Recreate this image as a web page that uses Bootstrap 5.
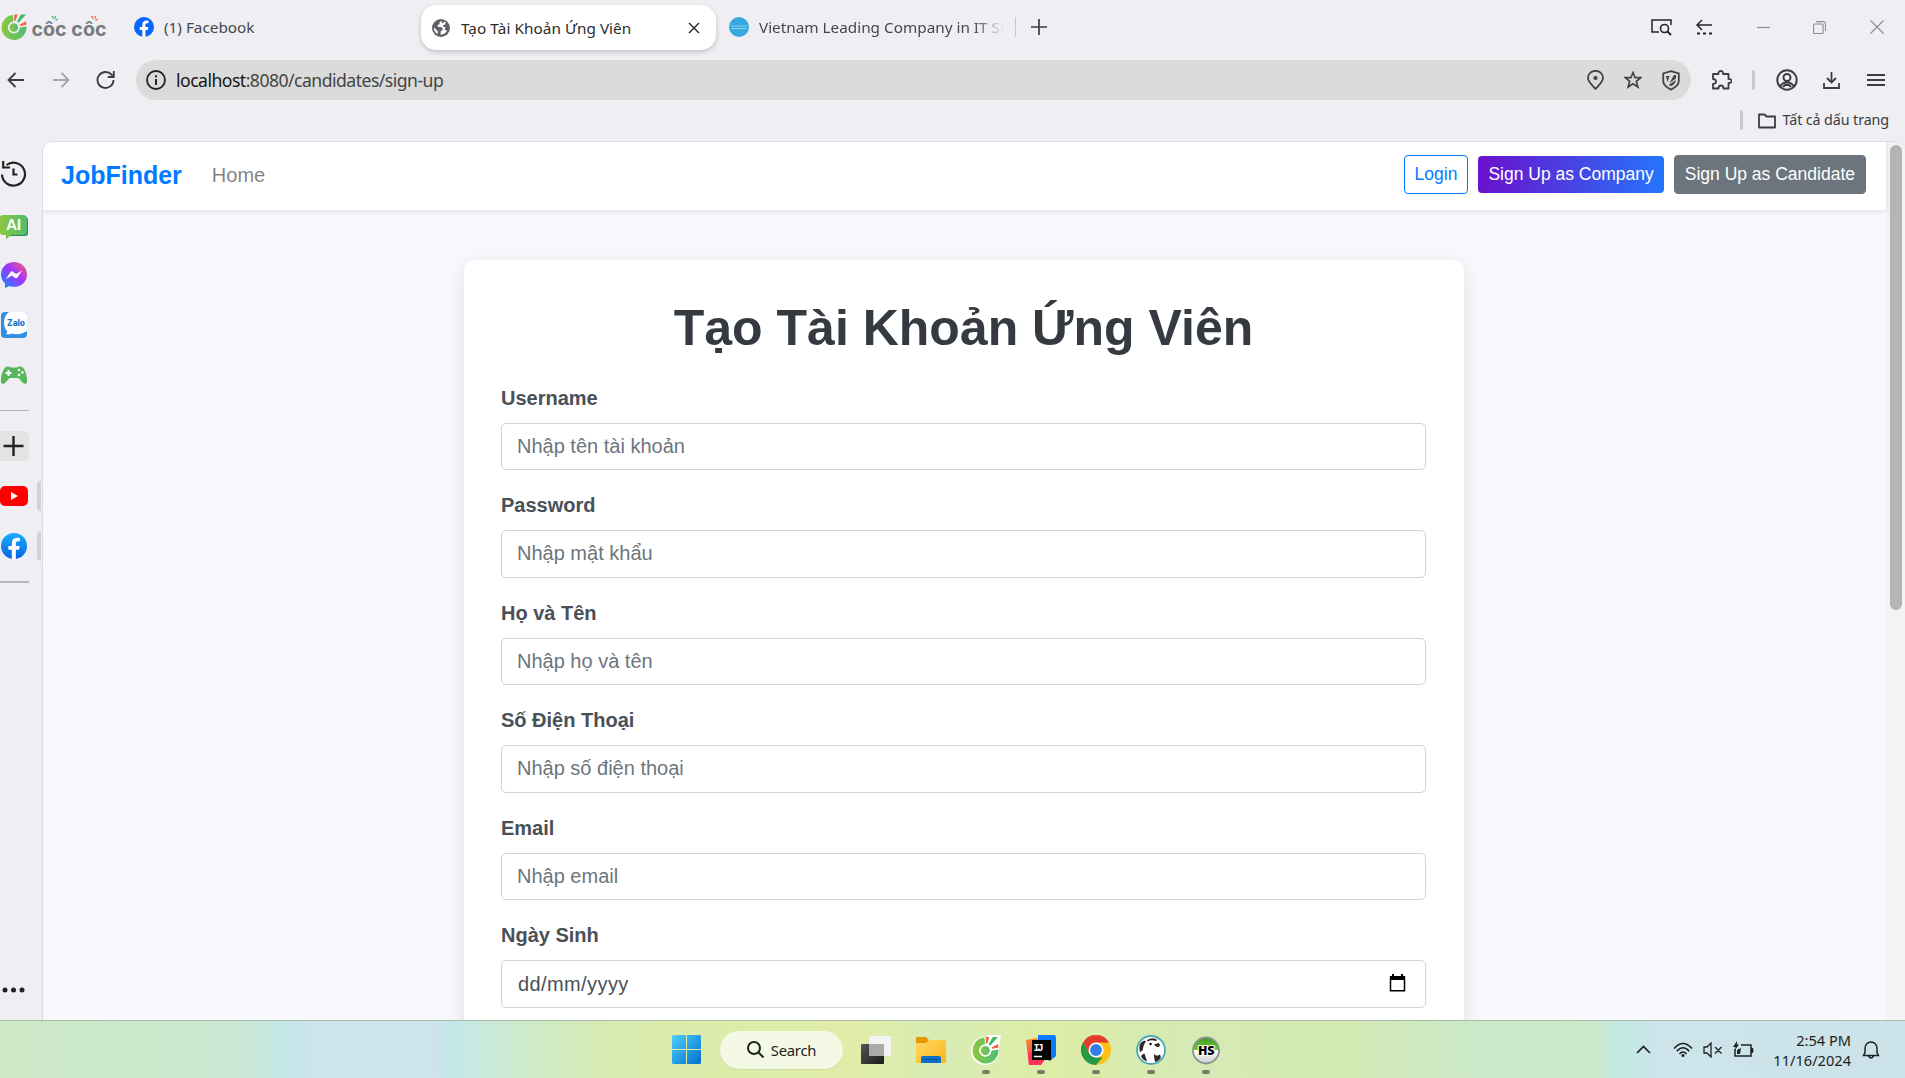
<!DOCTYPE html>
<html lang="vi">
<head>
<meta charset="utf-8">
<title>Tạo Tài Khoản Ứng Viên</title>
<link href="https://cdn.jsdelivr.net/npm/bootstrap@5.3.0/dist/css/bootstrap.min.css" rel="stylesheet">
<script defer src="https://cdn.jsdelivr.net/npm/bootstrap@5.3.0/dist/js/bootstrap.bundle.min.js"></script>
<style>
html,body{height:100%;overflow:hidden}
body{background:#efeef3;font-family:"Noto Sans","Open Sans",sans-serif;color:#3c3c41;font-size:16px;line-height:20px}
svg{display:block;flex:none}
.ln{fill:none;stroke:currentColor;stroke-width:1.8}
.win{height:1078px}
.midrow{min-height:0;flex:1 1 0}
/* tab strip */
.tabstrip{height:55px;padding-bottom:1px}
.tabtext{font-size:15.3px;color:#47474b}
.fbtab{width:287px;margin-left:26px;gap:10px}
.livetab{width:295px;height:45px;border-radius:15px;box-shadow:0 2px 5px #0003;padding:0 16px 0 11px;color:#222;margin-top:1px}
.livetab .tabtext{color:#2c2c2e;margin-left:11px;letter-spacing:.05px}
.nexttab{margin-left:13px;width:286px;gap:10px}
.fadetext{width:247px;-webkit-mask-image:linear-gradient(90deg,#000 215px,transparent 245px);mask-image:linear-gradient(90deg,#000 215px,transparent 245px)}
.winbtns{margin-right:21px;color:#8e8e92}
/* toolbar */
.toolbar{height:50px;padding:5px 20px 5px 7px}
.addr{width:1555px;margin-left:20px;background:#dbdbdb;padding:0 10px;color:#444}
.addrtext{font-size:17.6px;margin-left:10px;letter-spacing:-.52px}
.addrtext b{font-weight:400;color:#151515}
.vsep{width:3px;height:20px;background:#c8c8cc;border-radius:2px}
.marks{height:36px;padding:0 16px 11px 0}
.marktext{font-size:14.3px}
/* side panel */
.sidebar{width:42px;padding-top:9px}
.slot{height:50px;position:relative}
.slot::after{content:"";position:absolute}
.openapp::after{left:37px;top:10px;width:4px;height:30px;background:#d2d2d4;border-radius:4px 0 0 4px}
.rule{width:29px;background:#b6b6ba}
/* page */
.viewport-box{border:1px solid #dcdce0;border-width:1px 0 0 1px;border-radius:10px 10px 0 0;font-family:"Liberation Sans",Arial,sans-serif;font-size:20px;line-height:30px}
.pagebody{background:#f8f9fd}
.sitebar{height:68px;padding:0 20px 3px 18px;box-shadow:0 2px 5px #0000001a;position:relative}
.sitebar .navbar-brand{font-size:25px;font-weight:700;color:#007bff;margin-right:30px;padding:0}
.sitebar .nav-link{color:#00000080;padding:0}
.sitebar .btn{font-size:17.5px;line-height:26.25px;padding:5px 10px;border-radius:4px;border-width:1px}
.b-login{color:#007bff;border-color:#007bff}
.sitebar .b-comp{background:linear-gradient(90deg,#6a11cb,#2575fc);color:#fff;border:0}
.b-cand{background:#6c757d;color:#fff;border-color:#6c757d}
.formwrap{padding:50px 2px 0 0}
.formbox{width:1000px;margin:0 auto;padding:37.5px;border-radius:10px;box-shadow:0 5px 19px #0000001a;height:800px}
.formbox h1{font-size:50px;line-height:60px;font-weight:700;color:#343a40;margin:0 0 25px}
.formbox .form-label{font-weight:600;color:#495057;margin:0 0 10px;display:block}
.formbox .form-control{height:47.5px;border:1px solid #ced4da;border-radius:5px;font-size:20px;padding:6px 15px;color:#495057;line-height:30px}
.formbox .form-control::placeholder{color:#6c757d}
.formbox .datefield{padding-left:16px;padding-right:19px;letter-spacing:.4px}
.fld{margin-bottom:20px}
.scroller{width:19px;background:#f3f3f3;padding:3px 3px 0 4px}
.thumb{height:465px;width:12px;border-radius:6px;background:#b4b4b4}
/* taskbar */
.taskbar{height:58px;border-top:1px solid #a9bba4;color:#1d2321;background:linear-gradient(90deg,#cce8c6 0,#cae8cc 180px,#cae8d6 245px,#c2e7e9 285px,#cce4ea 310px,#cce4ea 435px,#c3e8ea 452px,#cbead5 500px,#d3ebbb 570px,#dcebaa 660px,#dfeda8 860px,#d8ebb4 940px,#deeda6 1050px,#d5eab4 1180px,#d4eab5 1350px,#cbe9c9 1480px,#cce9ca 1595px,#c2e8e2 1618px,#cce4ea 1655px,#cde3ea 100%)}
.startzone{margin-left:672px;width:549px}
.searchpill{width:123px;height:38px;border-radius:19px;background:#f4f9e6;margin:0 18px 0 19px;gap:7px;font-size:14.8px;box-shadow:0 1px 1px #0001}
.tapp{position:relative;width:30px;height:30px;margin-right:25px}
.running::after{content:"";position:absolute;left:11px;bottom:-9px;width:8px;height:4px;border-radius:2px;background:#727d63}
.tray{margin-left:auto;padding-right:25px}
.clock{font-size:14.6px;line-height:20px;width:97px;margin-right:11px}
</style>
</head>
<body>
<svg width="0" height="0" class="position-absolute">
<defs>
<linearGradient id="gr" x1="0" x2="1"><stop offset="0" stop-color="#8cc83f"/><stop offset="1" stop-color="#4fbd72"/></linearGradient>
<linearGradient id="fbg" x2="0" y2="1"><stop stop-color="#19aeff"/><stop offset="1" stop-color="#0563e4"/></linearGradient>
<linearGradient id="ms" x1="1" y1="0" x2="0" y2="1"><stop offset="0" stop-color="#ff6968"/><stop offset=".45" stop-color="#a033ff"/><stop offset="1" stop-color="#0a90ff"/></linearGradient>
<linearGradient id="wn" x2="1" y2="1"><stop stop-color="#4fd0fb"/><stop offset="1" stop-color="#0070cc"/></linearGradient>
<linearGradient id="fo" x2="1" y2="1"><stop stop-color="#ffd866"/><stop offset="1" stop-color="#fbb616"/></linearGradient>
<linearGradient id="ij" x1="0" y1="0" x2="0" y2="1"><stop stop-color="#fb8a2a"/><stop offset="1" stop-color="#fc2a6d"/></linearGradient>
<linearGradient id="hs" x2="0" y2="1"><stop stop-color="#3a9a20"/><stop offset=".5" stop-color="#70cf38"/><stop offset=".5" stop-color="#fff"/><stop offset="1" stop-color="#ccc"/></linearGradient>
<linearGradient id="tv" x2="1" y2="1"><stop stop-color="#555"/><stop offset="1" stop-color="#1c1c1c"/></linearGradient>
<symbol id="coc" viewBox="0 0 26 26">
<path fill="url(#gr)" d="M12 1A12.500 12.500 0 1 0 25.500 12.500L18.800 13.500A6 6 0 1 1 12.500 7.500Z"/>
<circle cx="12.800" cy="13.500" r="4.300" fill="url(#gr)"/>
<path fill="#f3603c" d="M13.300.500h3.200l-1.800 6.300h-1.400zM19 10.500l6-3.300.5 3.500-6.200 1.200z"/>
<path fill="#3fb864" d="M20 .500h5l-7.500 8.300-1.500-1z"/>
</symbol>
<symbol id="fb" viewBox="0 0 24 24"><circle cx="12" cy="12" r="12"/><path fill="#fff" d="M10 24v-8.500H6.800V12H10V9.500c0-3.300 2-5.200 4.900-5.200 1.200 0 2.100.2 2.500.3v3h-1.600c-1.700 0-2.100.9-2.100 2V12h3.500l-.6 3.500h-2.900V24z"/></symbol>
</defs>
</svg>

<div class="win d-flex flex-column">
<header class="flex-shrink-0">
 <div class="tabstrip d-flex align-items-center">
  <svg width="108" height="30" viewBox="0 0 108 30"><use href="#coc" x="1" y="2" width="26" height="26"/><text x="31.500" y="24" font-family="Inter" font-weight="700" font-size="19" textLength="75" lengthAdjust="spacingAndGlyphs" fill="#77797c">côc côc</text><path d="M52 4l2 3M55 4l.5 2.500M57.500 7l-2 1.500" stroke="#41b96c" stroke-width="1.200"/><path d="M91.500 4l2 3M95 4l.5 2.500M97.500 7l-2 1.500" stroke="#f3603c" stroke-width="1.200"/></svg>
  <div class="fbtab d-flex align-items-center"><svg width="20" height="20" fill="#0866ff"><use href="#fb"/></svg><span class="tabtext">(1) Facebook</span></div>
  <div class="livetab bg-white d-flex align-items-center">
   <svg width="18" height="18" viewBox="0 0 18 18"><circle cx="9" cy="9" r="9" fill="#5f6368"/><path fill="#fff" d="M9.500 1.800l-2 1.500.2 1.800-2 .8.200 2 3.300.2 1.500 1.500-.2 1.600-1.700.8-.2 3.800c3-.2 5.300-1.800 6.500-4.200L12.500 11l1-2.700-2.200-.6-.3-1.500 2-.5.600-2.400-1.300-.8-1 1.500-1.400.2zM1.800 8.300l4 4-.2 2.600C3 13.600 1.700 11 1.800 8.300z"/></svg>
   <span class="tabtext">Tạo Tài Khoản Ứng Viên</span>
   <svg class="ms-auto ln" width="12" height="12"><path stroke-width="1.400" d="M1 1l10 10M11 1L1 11"/></svg>
  </div>
  <div class="nexttab d-flex align-items-center"><svg width="20" height="20"><circle cx="10" cy="10" r="10" fill="#36a9e1"/><path d="M2 9h16M3 11.500h14" stroke="#a9dcf3" stroke-width="1" stroke-dasharray="2 .5"/></svg><span class="tabtext fadetext text-nowrap overflow-hidden">Vietnam Leading Company in IT Se</span></div>
  <div class="vsep" style="width:1px"></div>
  <svg class="ln" width="16" height="16" style="margin-left:15px"><path stroke-width="1.700" d="M8 0v16M0 8h16"/></svg>
  <div class="winbtns ms-auto d-flex align-items-center">
   <svg class="ln text-dark" width="21" height="17" style="margin-right:24px"><path d="M8 13H1V1h19v5" stroke-width="1.500"/><circle cx="13.500" cy="9.500" r="4" stroke-width="1.600"/><path d="M16.500 12.500l3.500 3.500"/></svg>
   <svg class="ln text-dark" width="17" height="17" style="margin-right:44px"><path d="M16 6H1M6 1L1 6l5 5" stroke-width="1.500"/><path d="M1 14.500h16" stroke-dasharray="3 3"/></svg>
   <svg class="ln" width="13" height="13" style="margin-right:43px"><path d="M0 6.500h13" stroke-width="1.200"/></svg>
   <svg class="ln" width="13" height="13" style="margin-right:44px"><rect x=".6" y="3" width="9.500" height="9.500" rx="1" stroke-width="1.100"/><path d="M3 .6h7.500q2 0 2 2V10" stroke-width="1.100"/></svg>
   <svg class="ln" width="14" height="14"><path d="M.5.5l13 13M13.500.5l-13 13" stroke-width="1.200"/></svg>
  </div>
 </div>
 <div class="toolbar d-flex align-items-center">
  <svg class="ln" width="17" height="16"><path d="M17 8H1.500M8.500 1l-7 7 7 7"/></svg>
  <svg class="ln" width="17" height="16" style="margin-left:29px;color:#a5a5aa"><path d="M0 8h15.500M8.500 1l7 7-7 7"/></svg>
  <svg class="ln" width="19" height="20" style="margin-left:26px"><path d="M17.500 10a8 8 0 1 1-2-5.300l2 1.800M17.800 1v6h-6"/></svg>
  <div class="addr h-100 rounded-pill d-flex align-items-center" style="margin-left:21px">
   <svg class="ln" width="20" height="20" style="color:#222"><circle cx="10" cy="10" r="9"/><path d="M10 9v6M10 5.300v2" stroke-width="2"/></svg>
   <span class="addrtext"><b>localhost</b>:8080/candidates/sign-up</span>
   <svg class="ln ms-auto" width="17" height="20"><path d="M8.500 19C4 14 1 11.500 1 8a7.500 7.200 0 0 1 15 0c0 3.500-3 6-7.500 11z"/><circle cx="8.500" cy="8" r="1.200" fill="#444"/></svg>
   <svg class="ln" width="18" height="18" style="margin-left:20px"><path stroke-width="1.700" d="M9 1.500l2.100 5.200h5.600l-4.400 3.600 1.600 5.700L9 12.800 4.100 16l1.600-5.700L1.300 6.700h5.600z"/></svg>
   <svg class="ln" width="18" height="21" style="margin:0 1px 0 20px"><path d="M9 1.200l7.800 2.300V11c0 4-3.500 6.500-7.800 8.600C4.700 17.500 1.200 15 1.200 11V3.500z"/><path fill="#444" stroke="none" d="M4 6h3.500L5.500 12zM7.500 13L12 5h2v3.500zM6.500 15l7.500-5c-1 4-3 5.500-5 6z"/></svg>
  </div>
  <svg class="ln" width="20" height="20" style="margin-left:21px"><path d="M1 4h5.500c-1-4 5.500-4 4.500 0h5.500v5c4-.8 4 4.500 0 4v5.500h-5c0-4-5-4-5 0H1v-4.700c4 0 4-4.800 0-4.800z" stroke-linejoin="round"/></svg>
  <span class="vsep" style="margin-left:20px"></span>
  <svg class="ln" width="22" height="22" style="margin-left:21px"><circle cx="11" cy="11" r="9.700" stroke-width="2"/><circle cx="11" cy="8.500" r="3.500" stroke-width="2"/><path d="M4.500 17.500C6 12 16 12 17.500 17.500M7 18l2-2h4l2 2" stroke-width="2"/></svg>
  <svg class="ln" width="17" height="17" style="margin-left:25px"><path d="M8.500 0v10M4 6l4.500 4.500L13 6M1 11v5h15v-5"/></svg>
  <svg class="ln ms-auto" width="18" height="14"><path d="M0 2h18M0 7h18M0 12h18"/></svg>
 </div>
 <div class="marks d-flex align-items-end justify-content-end">
  <span class="vsep" style="margin-right:15px"></span><svg class="ln" width="18" height="18" style="margin-right:7px"><path d="M1 15.500V2.500h5.500l2 2H17v11z" stroke-linejoin="round"/></svg><span class="marktext" style="letter-spacing:-.1px">Tất cả dấu trang</span>
 </div>
</header>

<div class="midrow d-flex overflow-hidden">
 <aside class="sidebar d-flex flex-column">
  <div class="slot d-flex align-items-center pb-1"><svg class="ln" width="28" height="27" style="color:#222"><path stroke-width="2.200" d="M2 14.500A11.500 11.500 0 1 0 6.500 5M3.200 1v6.500H10M13.500 8.500v6h4"/></svg></div>
  <div class="slot d-flex align-items-center pt-1"><svg width="28" height="25"><path fill="#2c8b51" d="M6 2h19q3 0 3 3v13q0 3-3 3H8z"/><path fill="url(#gr)" d="M3 0h20q4 0 4 4v12q0 4-4 4H11l-5 4.500V20H3q-3 0-3-3V3q0-3 3-3z"/><text x="6.500" y="15" font-family="Lato" font-weight="900" font-size="14.500" fill="#fff">AI</text></svg></div>
  <div class="slot d-flex align-items-center"><svg width="28" height="26"><path fill="url(#ms)" d="M14 0C6.500 0 1 5.500 1 12.500 1 16 2.500 19 5 21.500V26l4.500-2c8 3 17.500-2 17.500-11.500C27 5.500 21.500 0 14 0z"/><path fill="#fff" d="M6 17l4.500-7q1.200-1.500 3 0l2.500 2 6-3.500-4.500 7q-1.200 1.500-3 0L12 13.500z"/></svg></div>
  <div class="slot d-flex align-items-center"><svg width="28" height="26"><rect x="1" width="26" height="26" rx="4" fill="#2f8fe0"/><path fill="#fff" d="M9 0h14q4 0 4 4v15c-4 3-10 4-15 2.500-2 1-4 1-6 .5 1-1 1.500-2 1-3C2.500 14 3 4 9 0z"/><text x="7" y="14" font-family="Inter" font-weight="800" font-size="8.500" textLength="18" lengthAdjust="spacingAndGlyphs" fill="#1573c6">Zalo</text></svg></div>
  <div class="slot d-flex align-items-center"><svg width="28" height="18"><path fill="#58b65c" d="M7 .5Q9 0 11 1.500h6Q19 0 21 .5c4 1 6.500 10 6 15.500-.5 2.500-3 2-4.500.5L18.500 12h-9l-4 4.500C4 18 1.500 18.500 1 16 .5 10.500 3 1.500 7 .5z"/><path stroke="#fff" stroke-width="2" d="M8.500 4v6M5.500 7h6"/><g fill="#fff"><circle cx="19" cy="4" r="1.300"/><circle cx="19" cy="9" r="1.300"/><circle cx="22.500" cy="6.500" r="1.300"/></g></svg></div>
  <div class="rule" style="height:1px;margin:10px 0 20px"></div>
  <svg class="ln" width="29" height="30" style="color:#222"><rect x="-5" width="34" height="30" rx="6" fill="#e3e3e4" stroke="none"/><path stroke-width="2.400" d="M13.500 5v20M3.500 15h20"/></svg>
  <div class="slot openapp d-flex align-items-center" style="margin-top:10px"><svg width="28" height="20"><rect width="28" height="20" rx="5" fill="#f00"/><path fill="#fff" d="M11 6l7 4-7 4z"/></svg></div>
  <div class="slot openapp d-flex align-items-center"><svg width="28" height="26" fill="url(#fbg)"><use href="#fb" x="1" width="26" height="26"/></svg></div>
  <div class="rule" style="height:2px;margin-top:10px"></div>
  <svg class="mt-auto" width="25" height="6" style="margin-bottom:27px" fill="#222"><circle cx="5" cy="3" r="2.500"/><circle cx="13.500" cy="3" r="2.500"/><circle cx="22" cy="3" r="2.500"/></svg>
 </aside>
 <main class="viewport-box flex-fill d-flex overflow-hidden">
  <div class="pagebody flex-fill">
   <nav class="navbar navbar-expand sitebar bg-white d-flex flex-nowrap">
    <a class="navbar-brand" href="#">JobFinder</a>
    <a class="nav-link" href="#">Home</a>
    <div class="ms-auto d-flex align-items-center" style="gap:10px"><a class="btn b-login" href="#">Login</a><a class="btn b-comp" href="#">Sign Up as Company</a><a class="btn b-cand" href="#">Sign Up as Candidate</a></div>
   </nav>
   <div class="formwrap">
   <form class="formbox bg-white">
    <h1 class="text-center">Tạo Tài Khoản Ứng Viên</h1>
    <div class="fld"><label class="form-label">Username</label><input class="form-control" placeholder="Nhập tên tài khoản"></div>
    <div class="fld"><label class="form-label">Password</label><input class="form-control" type="password" placeholder="Nhập mật khẩu"></div>
    <div class="fld"><label class="form-label">Họ và Tên</label><input class="form-control" placeholder="Nhập họ và tên"></div>
    <div class="fld"><label class="form-label">Số Điện Thoại</label><input class="form-control" placeholder="Nhập số điện thoại"></div>
    <div class="fld"><label class="form-label">Email</label><input class="form-control" placeholder="Nhập email"></div>
    <div class="fld"><label class="form-label">Ngày Sinh</label><div class="form-control datefield d-flex align-items-center justify-content-between"><span>dd/mm/yyyy</span><svg width="17" height="19"><path d="M1.500 3.500h14v13.200h-14z" fill="none" stroke="#000" stroke-width="1.500"/><path d="M1 2h15v4H1zM3 0h2v3H3zM12 0h2v3h-2z"/></svg></div></div>
   </form>
   </div>
  </div>
  <div class="scroller"><div class="thumb"></div></div>
 </main>
</div>

<footer class="taskbar flex-shrink-0 d-flex align-items-center">
 <div class="startzone d-flex align-items-center">
  <svg width="29" height="29"><path fill="url(#wn)" d="M1 0h13v14H0V1zM15 0h13l1 1v13H15zM0 15h14v14H1l-1-1zM15 15h14v13l-1 1H15z"/></svg>
  <div class="searchpill d-flex align-items-center justify-content-center"><svg class="ln" width="17" height="17"><circle cx="7" cy="7" r="6" stroke-width="2"/><path stroke-width="2" d="M11.500 11.500l5 5"/></svg><span style="letter-spacing:-.25px">Search</span></div>
  <div class="tapp"><svg width="30" height="30"><rect y="9" width="23" height="20" rx="1" fill="url(#tv)"/><rect x="8" y="1" width="22" height="20" rx="1" fill="#f3f3f3"/><path fill="#aaa" d="M8 9h15v12H8z"/></svg></div>
  <div class="tapp"><svg width="30" height="30"><path fill="#e09a00" d="M0 3q0-1 1-1h9l3 3v4H0z"/><path fill="url(#fo)" d="M0 8h10l3-3h16l1 1v22H0z"/><path fill="#0a70c8" d="M5 28v-5q0-2 2-2h16q2 0 2 2v5z"/><path stroke="#064b8c" d="M8 24.500h14"/></svg></div>
  <div class="tapp running"><svg width="30" height="30"><circle cx="14" cy="16" r="14" fill="#fff"/><path fill="#fff" d="M15 0h15l-2 14z"/><use href="#coc" x="1" y="1" width="27" height="28"/></svg></div>
  <div class="tapp running"><svg width="30" height="30"><path fill="url(#ij)" d="M0 5l11-2 8 18-4 9H3z"/><path fill="#087cfa" d="M12 0h17l1 2v19l-6 5-12-6z"/><path fill="#fe315d" d="M2 17h16v9l-3 4H3z"/><path d="M6 5h19v20H6z"/><text x="7.500" y="15.500" font-family="Liberation Mono" font-weight="700" font-size="10" textLength="10" fill="#fff">IJ</text><path stroke="#fff" stroke-width="1.500" d="M8 21.500h8"/></svg></div>
  <div class="tapp running"><svg width="30" height="30"><circle cx="15" cy="15" r="15" fill="#fbc116"/><path fill="#e33b2e" d="M2 7.500A15 15 0 0 1 28 7.500H15L8.500 18.700z"/><path fill="#279847" d="M2 7.500l6.500 11.200L15 22.500h6.500L15 30A15 15 0 0 1 2 7.500z"/><circle cx="15" cy="15" r="7.500" fill="#fff"/><circle cx="15" cy="15" r="5.900" fill="#347de9"/></svg></div>
  <div class="tapp running"><svg width="30" height="30"><circle cx="15" cy="15" r="14" fill="#fff" stroke="#49a9b6" stroke-width="1.800"/><path fill="#302522" d="M3.500 10q3-5 6.500-4-3 4-3.500 9.500L4 17q-1-3-.5-7zM11 5q6-3.500 10.500 0l-2 1q-4-1.500-8 .5zM18 9.500l4.500-1.500q2.500 1.500.5 4-3 .5-5-2.500zM5 21q2-2.500 3.500-2.500l2.500 8q-4.500-1.500-6-5.500zM19 27q-1-4-1-8 3 3 6 .5 1.500 3 0 4.500-2 2.500-5 3z"/><circle cx="14.500" cy="9" r="1.200"/></svg></div>
  <div class="tapp running me-0"><svg width="30" height="30"><circle cx="15" cy="15.500" r="13" fill="url(#hs)" stroke="#8a948b" stroke-width="1.800"/><text x="7" y="20" font-family="Open Sans" font-weight="800" font-size="12.500" textLength="16.500" stroke="#fff" stroke-width="2" paint-order="stroke">HS</text></svg></div>
 </div>
 <div class="tray d-flex align-items-center">
  <svg class="ln" width="15" height="9" style="margin-right:22px"><path d="M1 8l6.500-6.500L14 8" stroke-width="1.700"/></svg>
  <svg class="ln" width="20" height="16" style="margin-right:10px"><path stroke-width="1.500" d="M1 6.500q9-10 18 0M3.800 9.300q6.200-7 12.400 0M6.500 12q3.500-4 7 0"/><circle cx="10" cy="13.500" r="1.500" fill="currentColor" stroke="none"/></svg>
  <svg class="ln" width="20" height="16" style="margin-right:10px"><path stroke-width="1.300" d="M1 5h3l4-4v14l-4-4H1zM12 5l6.500 6.500M18.500 5L12 11.500"/></svg>
  <svg class="ln" width="21" height="18"><path stroke-width="1.500" d="M8 4h10v11H2V8"/><path fill="currentColor" stroke="none" d="M4 0L0 6h2.500L2 9l4-5.500H4zM18 7h2q1 2 0 5h-2zM4 13V9l4-2-1 6z"/></svg>
  <div class="clock text-end">2:54 PM<br>11/16/2024</div>
  <svg class="ln" width="18" height="18"><path stroke-width="1.500" d="M1.500 14.500l1.500-3V7a6 6 0 0 1 12 0v4.500l1.500 3zM6.500 15q2.500 4 5 0"/></svg>
 </div>
</footer>
</div>
</body>
</html>
